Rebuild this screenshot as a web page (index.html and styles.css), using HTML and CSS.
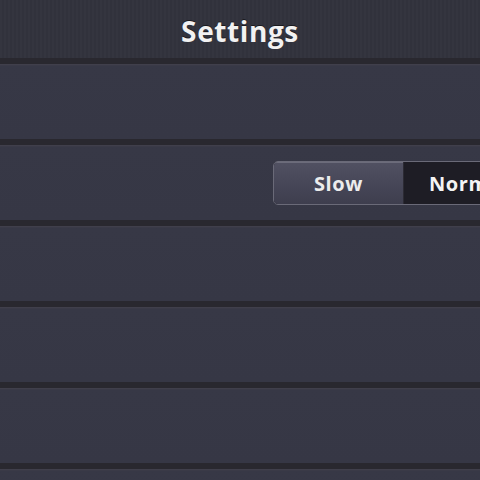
FILE: index.html
```html
<!DOCTYPE html>
<html>
<head>
<meta charset="utf-8">
<link rel="stylesheet" href="styles.css">
</head>
<body>
<div class="screen">
  <header class="navbar"><h1 class="title">Settings</h1></header>
  <div class="row"></div>
  <div class="row row-speed">
    <div class="segmented">
      <div class="seg seg-active">Slow</div>
      <div class="seg">Normal</div>
    </div>
  </div>
  <div class="row"></div>
  <div class="row"></div>
  <div class="row"></div>
  <div class="row"></div>
</div>
</body>
</html>
```
FILE: styles.css
```css
html, body {
  margin: 0;
  padding: 0;
  width: 480px;
  height: 480px;
  overflow: hidden;
  background: #363745;
}
.screen {
  width: 480px;
  height: 480px;
  overflow: hidden;
  display: flex;
  flex-direction: column;
  font-family: "Open Sans", "Liberation Sans", sans-serif;
}
.navbar {
  flex: 0 0 58px;
  display: flex;
  align-items: center;
  justify-content: center;
  background: repeating-linear-gradient(90deg, #34353f 0px, #34353f 2px, #31323c 2px, #31323c 4px);
}
.title {
  margin: 0;
  margin-top: 4px;
  color: #f2f2f2;
  font-size: 28px;
  font-weight: 700;
  letter-spacing: 0.6px;
  text-shadow: 0 -1px 0 rgba(0,0,0,0.5);
}
.row {
  flex: 0 0 81px;
  box-sizing: border-box;
  border-top: 6px solid #29282f;
  box-shadow: inset 0 1px 0 #403f4b, inset 0 2px 0 #3a3a47;
  background: linear-gradient(#373846, #363745);
  display: flex;
  align-items: center;
}
.row-speed {
  padding-left: 273px;
  padding-top: 1px;
}
.segmented {
  display: flex;
  height: 44px;
  flex: 0 0 auto;
  border: 1px solid #6a6a78;
  border-radius: 5px;
  overflow: hidden;
  box-sizing: border-box;
  background: #1e1d25;
}
.seg {
  width: 129px;
  display: flex;
  align-items: center;
  justify-content: center;
  color: #f4f4f4;
  font-size: 20px;
  font-weight: 700;
  letter-spacing: 0.6px;
  box-sizing: border-box;
}
.seg + .seg {
  justify-content: flex-start;
  padding-left: 25px;
  border-left: 1px solid #2c2b34;
}
.seg-active {
  background: linear-gradient(#515162, #474758 50%, #3e3e4e);
  box-shadow: inset 0 1px 0 #6c6c7b;
  color: #ececec;
}
```
